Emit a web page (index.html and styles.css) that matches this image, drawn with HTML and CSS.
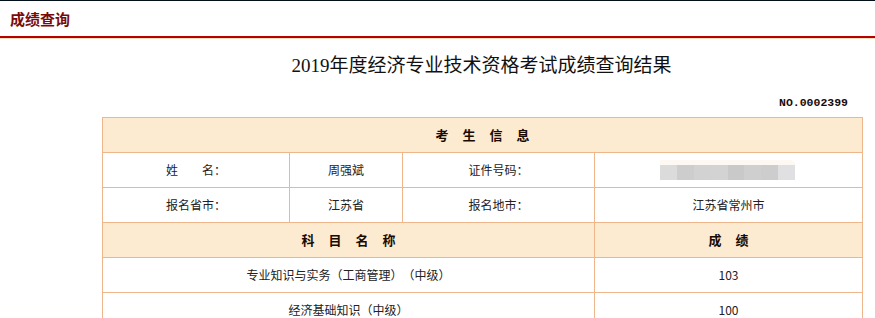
FILE: index.html
```html
<!DOCTYPE html>
<html lang="zh-CN">
<head>
<meta charset="utf-8">
<title>成绩查询</title>
<link rel="stylesheet" href="styles.css">
</head>
<body>
<div class="topbar"><span class="topbar-title">成绩查询</span></div>
<div class="topbar-line"></div>
<div class="content">
  <h1 class="title">2019年度经济专业技术资格考试成绩查询结果</h1>
  <div class="serial">NO.0002399</div>
  <table class="score-table">
    <colgroup>
      <col class="c1"><col class="c2"><col class="c3"><col class="c4">
    </colgroup>
    <tr class="head"><th colspan="4"><span class="spaced">考生信息</span></th></tr>
    <tr>
      <td>姓　　名：</td>
      <td>周强斌</td>
      <td>证件号码：</td>
      <td><div class="blur"><span class="b1"></span><span class="b2"></span><span class="b3"></span><span class="b4"></span><span class="b5"></span><span class="b6"></span><span class="b7"></span><span class="b8"></span></div></td>
    </tr>
    <tr>
      <td>报名省市：</td>
      <td>江苏省</td>
      <td>报名地市：</td>
      <td>江苏省常州市</td>
    </tr>
    <tr class="head">
      <th colspan="3"><span class="spaced">科目名称</span></th>
      <th><span class="spaced">成绩</span></th>
    </tr>
    <tr>
      <td colspan="3">专业知识与实务（工商管理）（中级）</td>
      <td>103</td>
    </tr>
    <tr>
      <td colspan="3">经济基础知识（中级）</td>
      <td>100</td>
    </tr>
  </table>
</div>
</body>
</html>
```
FILE: styles.css
```css
html, body {
  margin: 0;
  padding: 0;
  background: #fff;
}
body {
  font-family: "Noto Sans CJK SC", "Liberation Sans", sans-serif;
  color: #222;
  text-spacing-trim: space-all;
}
.topbar {
  border-top: 1px solid #001018;
  border-bottom: 2px solid #b80000;
  height: 35px;
  display: flex;
  align-items: center;
  padding-left: 10px;
  box-sizing: content-box;
}
.topbar-title {
  font-size: 15px;
  font-weight: bold;
  color: #7a0a0a;
  line-height: 20px;
}
.topbar-line {
  height: 1px;
  background: #f3e2c2;
}
.content {
  margin: 0 14px 0 102px;
}
.title {
  margin: 13px 0 0;
  font-family: "Liberation Serif", "Noto Sans CJK SC", serif;
  font-size: 19px;
  font-weight: normal;
  line-height: 28px;
  text-align: center;
  color: #111;
}
.serial {
  margin-top: 15px;
  text-align: right;
  padding-right: 13px;
  font-family: "Liberation Mono", monospace;
  font-weight: bold;
  font-size: 11.5px;
  line-height: 16px;
  color: #1a0a0a;
}
.score-table {
  margin-top: 6px;
  width: 760px;
  border-collapse: collapse;
  table-layout: fixed;
  font-size: 12px;
}
.c1 { width: 187px; }
.c2 { width: 113px; }
.c3 { width: 192px; }
.c4 { width: 268px; }
.score-table th,
.score-table td {
  border: 1px solid #efb68c;
  height: 34px;
  padding: 0;
  text-align: center;
  vertical-align: middle;
  line-height: 16px;
}
.head th {
  background: #fdebd1;
  font-size: 13px;
  font-weight: bold;
  color: #1a0a00;
}
.spaced {
  letter-spacing: 14px;
  padding-left: 14px;
}
.blur {
  display: flex;
  width: 135px;
  height: 15px;
  margin: 5px 0 0 65px;
  position: relative;
}
.blur::before {
  content: "";
  position: absolute;
  left: 0;
  right: 0;
  top: -5px;
  height: 5px;
  background: #fdf8f2;
  border-radius: 6px 30px 0 0;
}
.blur span {
  flex: 1;
  height: 15px;
}
.b1 { background: #dbdbdb; }
.b2 { background: #cdcdcd; }
.b3 { background: #d2d2d2; }
.b4 { background: #d3d3d3; }
.b5 { background: #c9c9ca; }
.b6 { background: #cfcfcf; }
.b7 { background: #cdcdcd; }
.b8 { background: #e0e0e2; }
```
